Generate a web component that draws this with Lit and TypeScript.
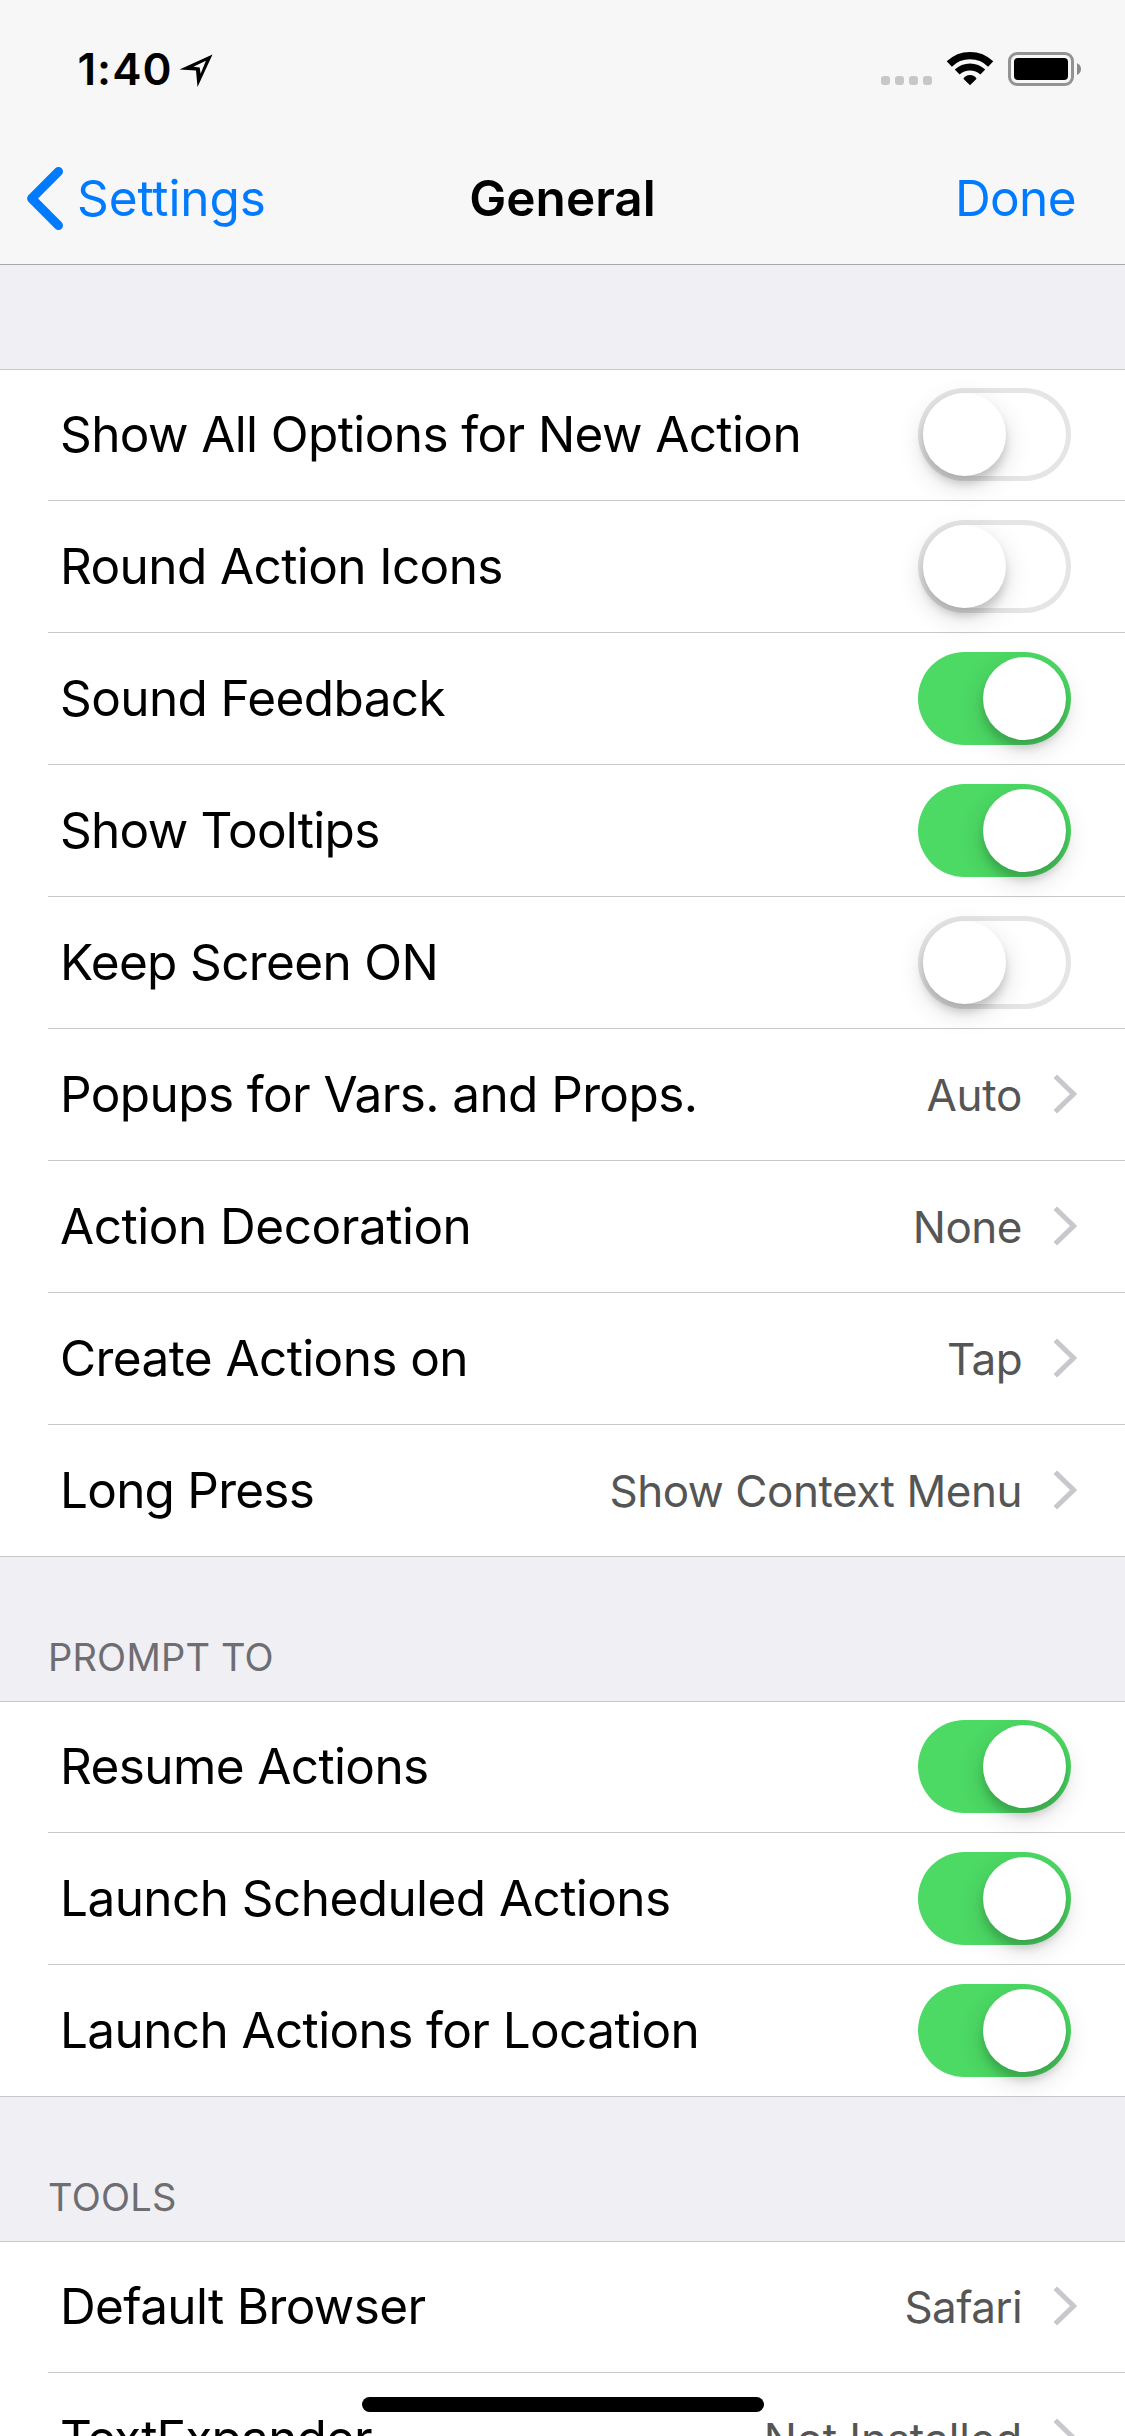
import { LitElement, html, css, svg, nothing } from "lit";
import { customElement, property } from "lit/decorators.js";
import { classMap } from "lit/directives/class-map.js";
import { styleMap } from "lit/directives/style-map.js";

interface Setting {
  label: string;
  /** Letter spacing of the label, in pixels. */
  track: number;
  on?: boolean;
  value?: string;
  valueTrack?: number;
}

interface Group {
  title?: string;
  titleTrack?: number;
  settings: Setting[];
}

const GROUPS: Group[] = [
  {
    settings: [
      { label: "Show All Options for New Action", track: -0.61, on: false },
      { label: "Round Action Icons", track: -0.6, on: false },
      { label: "Sound Feedback", track: -0.6, on: true },
      { label: "Show Tooltips", track: -0.73, on: true },
      { label: "Keep Screen ON", track: -0.64, on: false },
      { label: "Popups for Vars. and Props.", track: -0.6, value: "Auto", valueTrack: -0.3 },
      { label: "Action Decoration", track: -0.48, value: "None", valueTrack: -0.5 },
      { label: "Create Actions on", track: -0.6, value: "Tap", valueTrack: -0.6 },
      { label: "Long Press", track: -0.77, value: "Show Context Menu", valueTrack: -0.46 },
    ],
  },
  {
    title: "PROMPT TO",
    titleTrack: 0.2,
    settings: [
      { label: "Resume Actions", track: -0.62, on: true },
      { label: "Launch Scheduled Actions", track: -0.57, on: true },
      { label: "Launch Actions for Location", track: -0.62, on: true },
    ],
  },
  {
    title: "TOOLS",
    titleTrack: 0.25,
    settings: [
      { label: "Default Browser", track: -0.65, value: "Safari", valueTrack: -0.6 },
      { label: "TextExpander", track: -0.89, value: "Not Installed", valueTrack: -0.17 },
    ],
  },
];

@customElement("ios-switch")
class IosSwitch extends LitElement {
  @property({ type: Boolean }) on = false;

  static styles = css`
    :host {
      display: block;
      flex: none;
    }
    .track {
      display: flex;
      box-sizing: border-box;
      width: 153px;
      height: 93px;
      padding: 5px;
      border-radius: 46.5px;
      box-shadow: inset 0 0 0 5px #e5e5e5;
    }
    .track.on {
      justify-content: flex-end;
      background: #4cd964;
      box-shadow: none;
    }
    .knob {
      width: 83px;
      height: 83px;
      border-radius: 50%;
      background: #fff;
      box-shadow: 0 9px 27px rgba(0, 0, 0, 0.15), 0 8px 9px rgba(0, 0, 0, 0.15);
    }
  `;

  render() {
    return html`<div class=${classMap({ track: true, on: this.on })}><div class="knob"></div></div>`;
  }
}

@customElement("status-bar")
class StatusBar extends LitElement {
  static styles = css`
    :host {
      display: block;
    }
    .bar {
      display: flex;
      align-items: center;
      box-sizing: border-box;
      height: 132px;
      padding: 6px 44px 0 77.5px;
    }
    .time {
      font-size: 44px;
      font-weight: 600;
      letter-spacing: 1px;
      line-height: 60px;
      width: 101.5px;
    }
    .arrow {
      margin-top: 3px;
    }
    .icons {
      display: flex;
      margin-left: auto;
    }
    svg {
      display: block;
    }
  `;

  render() {
    return html`
      <div class="bar">
        <div class="time">1:40</div>
        <svg class="arrow" width="34" height="34" viewBox="0 0 34 34">
          <path
            fill-rule="evenodd"
            d="M33.5 0.5 L18.5 33 L17 16.6 L0.5 15.6 Z M26.9 6.8 L14.4 12.8 L20.7 13.6 L21.6 19.8 Z"
          />
        </svg>
        <div class="icons">
          <svg width="202" height="36" viewBox="879 51 202 36">
            ${[881, 895, 909, 923].map(
              (x) => svg`<rect x=${x} y="76" width="9" height="9" rx="3" fill="#c7c7c7" />`,
            )}
            <g fill="none" stroke="#000">
              <path d="M949.3 64 A29.8 29.8 0 0 1 990.7 64" stroke-width="7.4" />
              <path d="M957.2 72 A18.7 18.7 0 0 1 982.8 72" stroke-width="7" />
            </g>
            <path d="M970 85.2 L963.4 78.7 Q965.5 75 970 75 Q974.5 75 976.6 78.7 Z" />
            <rect x="1009.5" y="53.5" width="63" height="31" rx="7.5" fill="none" stroke="#939393" stroke-width="3" />
            <rect x="1014" y="58" width="54" height="22" rx="4" />
            <path d="M1077 63 Q1081 65 1081 69 Q1081 73 1077 75 Z" fill="#8a8a8a" />
          </svg>
        </div>
      </div>
    `;
  }
}

@customElement("nav-bar")
class NavBar extends LitElement {
  static styles = css`
    :host {
      display: block;
    }
    .bar {
      display: grid;
      grid-template-columns: 1fr auto 1fr;
      align-items: center;
      height: 132px;
      padding: 0 49px 0 24px;
      border-bottom: 1px solid #a7a7aa;
      font-size: 49.5px;
      line-height: 132px;
    }
    .back {
      display: flex;
      align-items: center;
      gap: 11px;
      color: #007aff;
      letter-spacing: -0.1px;
    }
    .back svg {
      display: block;
    }
    .title {
      font-weight: 600;
      letter-spacing: 0;
      margin-left: 25px;
    }
    .done {
      justify-self: end;
      color: #007aff;
      letter-spacing: -0.6px;
    }
  `;

  render() {
    return html`
      <div class="bar">
        <div class="back">
          <svg width="42" height="66" viewBox="0 0 42 66">
            <path
              d="M34.5 6.5 L7.6 33.5 L34.5 60.5"
              fill="none"
              stroke="#007aff"
              stroke-width="9"
              stroke-linecap="round"
              stroke-linejoin="round"
            />
          </svg>
          Settings
        </div>
        <div class="title">General</div>
        <div class="done">Done</div>
      </div>
    `;
  }
}

@customElement("settings-group")
class SettingsGroup extends LitElement {
  @property({ attribute: false }) group!: Group;

  static styles = css`
    :host {
      display: block;
    }
    .header {
      display: flex;
      align-items: flex-end;
      box-sizing: border-box;
      height: 104px;
      padding: 0 48px 16px;
      font-size: 38px;
      line-height: 56px;
      color: #6d6d72;
    }
    .header.titled {
      height: 144px;
    }
    .list {
      border-top: 1px solid #c8c7cc;
      border-bottom: 1px solid #c8c7cc;
      background: #fff;
    }
    .row {
      display: flex;
      align-items: center;
      box-sizing: border-box;
      height: 132px;
      margin-left: 48px;
      padding: 0 54px 0 12px;
      border-bottom: 1px solid #c8c7cc;
    }
    .row:first-child {
      height: 131px;
      padding-bottom: 1px;
    }
    .row:last-child {
      height: 131px;
      border-bottom: none;
    }
    .label {
      flex: 1;
      padding-bottom: 2px;
      font-size: 49.5px;
      line-height: 60px;
      white-space: nowrap;
    }
    .value {
      font-size: 44px;
      line-height: 54px;
      color: #555;
      white-space: nowrap;
    }
    .chevron {
      display: block;
      flex: none;
      width: 24px;
      height: 40px;
      margin: 0 -6px 1px 31px;
    }
  `;

  private renderSetting(s: Setting) {
    return html`
      <div class="row">
        <div class="label" style=${styleMap({ letterSpacing: `${s.track}px` })}>${s.label}</div>
        ${s.on !== undefined ? html`<ios-switch ?on=${s.on}></ios-switch>` : nothing}
        ${s.value
          ? html`
              <div class="value" style=${styleMap({ letterSpacing: `${s.valueTrack}px` })}>${s.value}</div>
              <svg class="chevron" viewBox="0 0 24 40">
                <path d="M2.3 2.2 L20.6 20 L2.3 37.8" fill="none" stroke="#c7c7cc" stroke-width="5" />
              </svg>
            `
          : nothing}
      </div>
    `;
  }

  render() {
    const { title, titleTrack = 0, settings } = this.group;
    return html`
      <div
        class=${classMap({ header: true, titled: !!title })}
        style=${styleMap({ letterSpacing: `${titleTrack}px` })}
      >
        ${title ?? nothing}
      </div>
      <div class="list">${settings.map((s) => this.renderSetting(s))}</div>
    `;
  }
}

@customElement("app-root")
class AppRoot extends LitElement {
  static styles = css`
    :host {
      display: block;
      position: relative;
      width: 1125px;
      height: 2436px;
      overflow: hidden;
      background: #efeff4;
      color: #000;
      font-family: Inter, "Liberation Sans", sans-serif;
    }
    .top {
      background: #f7f7f7;
    }
    .home {
      position: absolute;
      left: 362px;
      bottom: 24px;
      width: 402px;
      height: 15px;
      border-radius: 7.5px;
      background: #000;
    }
  `;

  render() {
    return html`
      <div class="top">
        <status-bar></status-bar>
        <nav-bar></nav-bar>
      </div>
      ${GROUPS.map((g) => html`<settings-group .group=${g}></settings-group>`)}
      <div class="home"></div>
    `;
  }
}
